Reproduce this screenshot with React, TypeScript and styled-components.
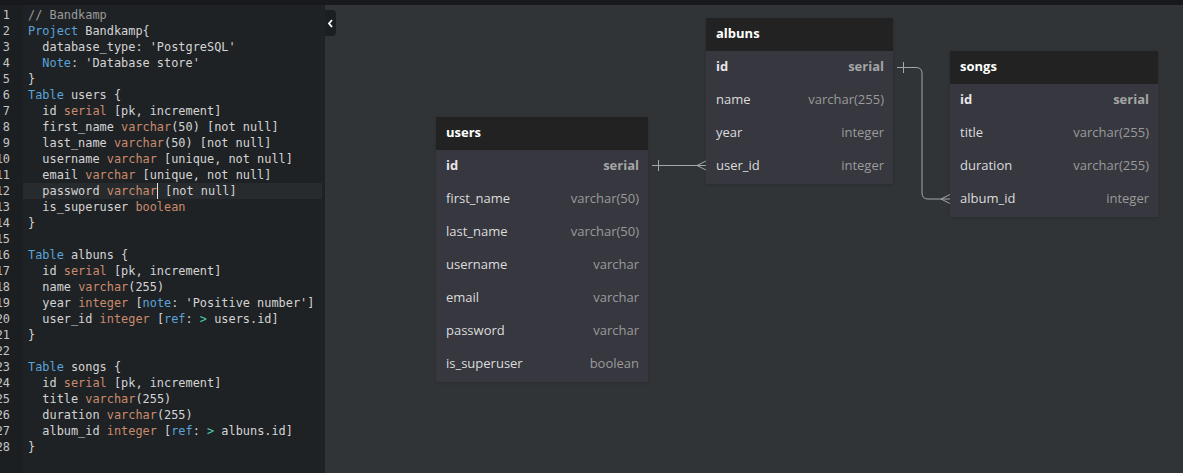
import React from 'react'
import styled, { createGlobalStyle } from 'styled-components'

const Global = createGlobalStyle`
  html, body {
    margin: 0;
    padding: 0;
    background: #303437;
    overflow: hidden;
  }
`

type Kind = 't' | 'k' | 'y' | 'c' | 'o' | 'cur'
type Tok = [Kind, string]

const code: Tok[][] = [
  [['c', '// Bandkamp']],
  [['k', 'Project'], ['t', ' Bandkamp{']],
  [['t', "  database_type: 'PostgreSQL'"]],
  [['t', '  '], ['k', 'Note'], ['t', ": 'Database store'"]],
  [['t', '}']],
  [['k', 'Table'], ['t', ' users {']],
  [['t', '  id '], ['y', 'serial'], ['t', ' [pk, increment]']],
  [['t', '  first_name '], ['y', 'varchar'], ['t', '(50) [not null]']],
  [['t', '  last_name '], ['y', 'varchar'], ['t', '(50) [not null]']],
  [['t', '  username '], ['y', 'varchar'], ['t', ' [unique, not null]']],
  [['t', '  email '], ['y', 'varchar'], ['t', ' [unique, not null]']],
  [['t', '  password '], ['y', 'varchar'], ['cur', ''], ['t', ' [not null]']],
  [['t', '  is_superuser '], ['y', 'boolean']],
  [['t', '}']],
  [],
  [['k', 'Table'], ['t', ' albuns {']],
  [['t', '  id '], ['y', 'serial'], ['t', ' [pk, increment]']],
  [['t', '  name '], ['y', 'varchar'], ['t', '(255)']],
  [['t', '  year '], ['y', 'integer'], ['t', ' ['], ['k', 'note'], ['t', ": 'Positive number']"]],
  [['t', '  user_id '], ['y', 'integer'], ['t', ' ['], ['k', 'ref'], ['t', ': '], ['o', '>'], ['t', ' users.id]']],
  [['t', '}']],
  [],
  [['k', 'Table'], ['t', ' songs {']],
  [['t', '  id '], ['y', 'serial'], ['t', ' [pk, increment]']],
  [['t', '  title '], ['y', 'varchar'], ['t', '(255)']],
  [['t', '  duration '], ['y', 'varchar'], ['t', '(255)']],
  [['t', '  album_id '], ['y', 'integer'], ['t', ' ['], ['k', 'ref'], ['t', ': '], ['o', '>'], ['t', ' albuns.id]']],
  [['t', '}']],
]

type Field = { name: string; type: string }
type TableDef = { name: string; x: number; y: number; w: number; fields: Field[] }

// canvas origin is page (325, 5)
const tables: TableDef[] = [
  {
    name: 'users', x: 111, y: 112, w: 212,
    fields: [
      { name: 'id', type: 'serial' },
      { name: 'first_name', type: 'varchar(50)' },
      { name: 'last_name', type: 'varchar(50)' },
      { name: 'username', type: 'varchar' },
      { name: 'email', type: 'varchar' },
      { name: 'password', type: 'varchar' },
      { name: 'is_superuser', type: 'boolean' },
    ],
  },
  {
    name: 'albuns', x: 381, y: 13, w: 187,
    fields: [
      { name: 'id', type: 'serial' },
      { name: 'name', type: 'varchar(255)' },
      { name: 'year', type: 'integer' },
      { name: 'user_id', type: 'integer' },
    ],
  },
  {
    name: 'songs', x: 625, y: 46, w: 208,
    fields: [
      { name: 'id', type: 'serial' },
      { name: 'title', type: 'varchar(255)' },
      { name: 'duration', type: 'varchar(255)' },
      { name: 'album_id', type: 'integer' },
    ],
  },
]

const Page = styled.div`
  display: flex;
  flex-direction: column;
  width: 100vw;
  height: 100vh;
`

const TopBar = styled.div`
  height: 5px;
  flex: none;
  background: #17191d;
`

const Main = styled.div`
  flex: 1;
  display: flex;
  min-height: 0;
`

const Editor = styled.div`
  width: 325px;
  flex: none;
  display: flex;
  background: #1f2225;
  font-family: 'DejaVu Sans Mono', 'Liberation Mono', monospace;
  font-size: 11.9px;
  line-height: 16px;
  padding-top: 2px;
  box-sizing: border-box;
`

const Gutter = styled.div`
  width: 23px;
  flex: none;
  overflow: hidden;
  background: #1c1f22;
  color: #c4c4c4;
  margin-top: -2px;
  padding-top: 2px;
`

// numbers are right-aligned and clipped on the left, like the reference
const LineNo = styled.div`
  width: 30px;
  margin-left: -20px;
  text-align: right;
  height: 16px;
`

const Lines = styled.div`
  flex: 1;
  min-width: 0;
`

const Line = styled.div<{ $active?: boolean }>`
  height: 16px;
  padding-left: 5px;
  margin-right: 3px;
  white-space: pre;
  color: #d4d4d4;
  background: ${p => (p.$active ? '#282b2e' : 'transparent')};
`

const colors: Record<Kind, string> = {
  t: '#d4d4d4',
  k: '#5aa2d8',
  y: '#c98b6c',
  c: '#9a9a9a',
  o: '#4ec9b0',
  cur: '#e0e0e0',
}

const Span = styled.span<{ $kind: Kind }>`
  color: ${p => colors[p.$kind]};
`

const Cursor = styled.span`
  display: inline-block;
  width: 0;
  height: 16px;
  vertical-align: top;
  border-left: 1px solid #e6e6e6;
`

const Canvas = styled.div`
  flex: 1;
  position: relative;
  background: #303437;
  overflow: hidden;
  font-family: 'Open Sans', 'Noto Sans', sans-serif;
`

const Collapse = styled.div`
  position: absolute;
  left: 0;
  top: 5px;
  width: 11px;
  height: 26px;
  background: #1b1e22;
  border-radius: 0 4px 4px 0;
  display: flex;
  align-items: center;
  justify-content: center;
`

const Links = styled.svg`
  position: absolute;
  inset: 0;
  width: 100%;
  height: 100%;
`

const Table = styled.div`
  position: absolute;
  background: #36373f;
  padding-bottom: 1px;
  box-shadow: 0 1px 3px rgba(0, 0, 0, 0.15);
`

const Header = styled.div`
  height: 33px;
  box-sizing: border-box;
  display: flex;
  align-items: center;
  padding: 0 10px 4px;
  background: #222222;
  color: #ffffff;
  font-weight: 700;
  font-size: 13px;
`

const Row = styled.div<{ $key?: boolean }>`
  height: 33px;
  box-sizing: border-box;
  display: flex;
  align-items: center;
  justify-content: space-between;
  padding: 0 9px 4px 10px;
  font-size: 13px;
  font-weight: ${p => (p.$key ? 700 : 400)};
`

const FieldName = styled.span<{ $key?: boolean }>`
  color: ${p => (p.$key ? '#e6e6e6' : '#dcdcdc')};
`

const FieldType = styled.span<{ $key?: boolean }>`
  color: ${p => (p.$key ? '#a5a5a5' : '#9a9a9a')};
`

export default function App() {
  return (
    <Page>
      <Global />
      <TopBar />
      <Main>
        <Editor>
          <Gutter>
            {code.map((_, i) => (
              <LineNo key={i}>{i + 1}</LineNo>
            ))}
          </Gutter>
          <Lines>
            {code.map((toks, i) => (
              <Line key={i} $active={i === 11}>
                {toks.map(([k, s], j) =>
                  k === 'cur' ? <Cursor key={j} /> : <Span key={j} $kind={k}>{s}</Span>
                )}
              </Line>
            ))}
          </Lines>
        </Editor>
        <Canvas>
          <Links viewBox="325 5 858 468" preserveAspectRatio="xMinYMin slice">
            <g stroke="#a3a6ab" strokeWidth="1" fill="none">
              <path d="M652 165.5 H706" />
              <path d="M658.5 160 V171" />
              <path d="M697 165.5 L706 161 M697 165.5 L706 170" />
              <path d="M897 67.5 H916 Q922 67.5 922 73.5 V193 Q922 199 928 199 H950" />
              <path d="M903.5 62 V73" />
              <path d="M941 199 L950 194.5 M941 199 L950 203.5" />
            </g>
          </Links>
          <Collapse>
            <svg width="7" height="9" viewBox="0 0 7 9">
              <path d="M5 1 L2 4.5 L5 8" stroke="#ffffff" strokeWidth="1.8" fill="none" />
            </svg>
          </Collapse>
          {tables.map(t => (
            <Table key={t.name} style={{ left: t.x, top: t.y, width: t.w }}>
              <Header>{t.name}</Header>
              {t.fields.map(f => {
                const key = f.name === 'id'
                return (
                  <Row key={f.name} $key={key}>
                    <FieldName $key={key}>{f.name}</FieldName>
                    <FieldType $key={key}>{f.type}</FieldType>
                  </Row>
                )
              })}
            </Table>
          ))}
        </Canvas>
      </Main>
    </Page>
  )
}
